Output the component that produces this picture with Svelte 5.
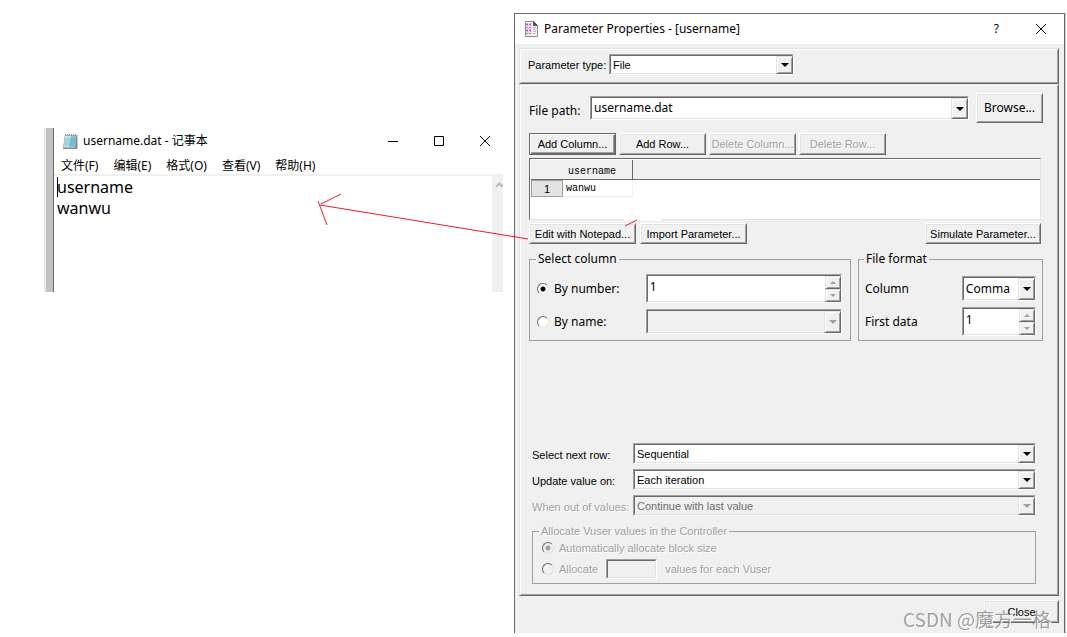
<script lang="ts">
	let notes = $state('username\nwanwu');
	let columnBy = $state('number');
	let allocation = $state('auto');
	let columnNumber = $state('1');
	let firstData = $state('1');

	const menus = ['文件(F)', '编辑(E)', '格式(O)', '查看(V)', '帮助(H)'];

	const rowSettings = [
		{ id: 'next-row', label: 'Select next row:', value: 'Sequential', disabled: false },
		{ id: 'update-on', label: 'Update value on:', value: 'Each iteration', disabled: false },
		{ id: 'out-of-values', label: 'When out of values:', value: 'Continue with last value', disabled: true }
	];
</script>

{#snippet combo(id: string, value: string, disabled: boolean, label: string | undefined)}
	<span class="field combo" class:off={disabled}>
		<select {id} {disabled} aria-label={label}>
			<option>{value}</option>
		</select>
		<span class="drop"><i class="down"></i></span>
	</span>
{/snippet}

{#snippet spinButtons()}
	<span class="spin">
		<button type="button" aria-label="Increase"><i class="up"></i></button>
		<button type="button" aria-label="Decrease"><i class="down"></i></button>
	</span>
{/snippet}

<main class="desktop">
	<section class="notepad" aria-label="Notepad">
		<header>
			<svg class="note-icon" width="16" height="17" viewBox="0 0 16 17">
				<path d="M3 2h12.500v14H1z" fill="#8b8f80" />
				<path d="M3 2h11.500l-1.500 13H1z" fill="#84c6d6" />
				<path d="M3 3h6L7 14H2z" fill="#bfe6ee" />
				<path d="M3 6h10.500M3 8h10M2.500 10h10.500M2.500 12h10" stroke="#5fa9bb" stroke-width=".6" />
				<path d="M3.500 1v2M5.500 1v2M7.500 1v2M9.500 1v2M11.500 1v2M13.500 1v2" stroke="#8a9ba0" />
			</svg>
			<h1>username.dat - 记事本</h1>
			<div class="window-buttons">
				<button type="button" aria-label="Minimize">
					<svg width="12" height="12"><path d="M1 6.500h10" /></svg>
				</button>
				<button type="button" aria-label="Maximize">
					<svg width="12" height="12"><path d="M1.500 1.500h9v9h-9z" /></svg>
				</button>
				<button type="button" aria-label="Close">
					<svg width="12" height="12"><path d="M1 1l10 10M11 1L1 11" /></svg>
				</button>
			</div>
		</header>
		<nav>
			{#each menus as menu}
				<button type="button">{menu}</button>
			{/each}
		</nav>
		<div class="editor">
			<textarea bind:value={notes} aria-label="Text" spellcheck="false"></textarea>
			<span class="caret"></span>
			<div class="scrollbar">
				<svg width="8" height="8"><path d="M1 6l3.500-3.500L8 6" fill="none" stroke="#bbb" stroke-width="2" /></svg>
			</div>
		</div>
	</section>

	<section class="dialog" aria-label="Parameter Properties">
		<header>
			<svg width="15" height="16" viewBox="0 0 15 16">
				<path d="M1.500.500h8l4 4v11h-12z" fill="#f4f4f4" stroke="#8c8c8c" />
				<path d="M9.500.500v4h4z" fill="#555" stroke="#555" />
				<path d="M9 6.500h3M9 8.500h3M9 10.500h3M9 12.500h3" stroke="#b5b5b5" />
				<path d="M2 2h6v12H2z" fill="#f3d9f4" />
				<path d="M2 3.500h6M2 6.500h6M2 9.500h6M2 12.500h6" stroke="#b565bd" stroke-dasharray="2 1" />
				<path d="M3.500 2v12M6.500 2v12" stroke="#c98bd0" stroke-dasharray="1 1" />
			</svg>
			<h2>Parameter Properties - [username]</h2>
			<button class="help" type="button" aria-label="Help">?</button>
			<button type="button" aria-label="Close window">
				<svg width="12" height="12"><path d="M1 1l10 10M11 1L1 11" /></svg>
			</button>
		</header>

		<div class="panel type-panel">
			<label for="param-type">Parameter type:</label>
			{@render combo('param-type', 'File', false, undefined)}
		</div>

		<div class="panel">
			<div class="path-row large">
				<label for="file-path">File path:</label>
				{@render combo('file-path', 'username.dat', false, undefined)}
				<button class="push" type="button">Browse...</button>
			</div>

			<div class="column-buttons">
				<button class="push default" type="button">Add Column...</button>
				<button class="push" type="button">Add Row...</button>
				<button class="push" type="button" disabled>Delete Column...</button>
				<button class="push" type="button" disabled>Delete Row...</button>
			</div>

			<div class="data">
				<table>
					<thead>
						<tr><th class="index"></th><th class="name">username</th><th></th></tr>
					</thead>
					<tbody>
						<tr><th class="index">1</th><td class="name">wanwu</td><td></td></tr>
					</tbody>
				</table>
			</div>

			<div class="edit-buttons">
				<button class="push" type="button">Edit with Notepad...</button>
				<button class="push" type="button">Import Parameter...</button>
				<button class="push simulate" type="button">Simulate Parameter...</button>
			</div>

			<div class="groups large">
				<fieldset class="select-column">
					<legend>Select column</legend>
					<div class="group-row">
						<label><input type="radio" value="number" bind:group={columnBy} />By number:</label>
						<span class="field tall">
							<input type="text" bind:value={columnNumber} aria-label="Column number" />
							{@render spinButtons()}
						</span>
					</div>
					<div class="group-row">
						<label><input type="radio" value="name" bind:group={columnBy} />By name:</label>
						{@render combo('column-name', '', true, 'Column name')}
					</div>
				</fieldset>
				<fieldset class="file-format">
					<legend>File format</legend>
					<div class="group-row">
						<label for="delimiter">Column</label>
						{@render combo('delimiter', 'Comma', false, undefined)}
					</div>
					<div class="group-row">
						<label for="first-data">First data</label>
						<span class="field tall">
							<input id="first-data" type="text" bind:value={firstData} />
							{@render spinButtons()}
						</span>
					</div>
				</fieldset>
			</div>

			<div class="row-settings">
				{#each rowSettings as s (s.id)}
					<div class="setting">
						<label for={s.id} class:dim={s.disabled}>{s.label}</label>
						{@render combo(s.id, s.value, s.disabled, undefined)}
					</div>
				{/each}
			</div>

			<fieldset class="allocate dim" disabled>
				<legend>Allocate Vuser values in the Controller</legend>
				<label><input type="radio" value="auto" bind:group={allocation} />Automatically allocate block size</label>
				<div class="block-size">
					<label><input type="radio" value="manual" bind:group={allocation} />Allocate</label>
					<span class="field off"><input type="text" aria-label="Block size" /></span>
					<span>values for each Vuser</span>
				</div>
			</fieldset>
		</div>

		<footer>
			<button class="push" type="button">Close</button>
		</footer>

		<span class="watermark">CSDN @魔方一格</span>

		<!-- hand-drawn pointer from "Edit with Notepad..." to the Notepad window -->
		<svg class="pointer" width="330" height="50" viewBox="314 190 330 50">
			<path d="M624 219.500h38" stroke="#fff" stroke-width="2" />
			<path d="M528 239L320 205M341 194L321 204M318 201L327 225M625 226L637 220" stroke="#ed1c24" fill="none" />
		</svg>
	</section>
</main>

<style>
	:global(body) {
		background: #fff;
	}

	.desktop {
		display: flex;
		align-items: flex-start;
		gap: 11px;
		padding: 13px 2px 4px 44px;
		font-family: 'Liberation Sans', Arial, sans-serif;
		font-size: 11px;
		line-height: 14px;
		color: #000;
	}

	button,
	input,
	select,
	textarea {
		box-sizing: border-box;
		margin: 0;
		padding: 0;
		border: 0;
		border-radius: 0;
		background: none;
		color: inherit;
		font: inherit;
		outline: none;
	}

	h1,
	h2 {
		margin: 0;
		font-size: 12px;
		font-weight: 400;
		white-space: nowrap;
	}

	header button svg {
		display: block;
		fill: none;
		stroke: #000;
	}

	/* Notepad */
	.notepad {
		flex: 459 1 459px;
		min-width: 0;
		margin-top: 115px;
		box-sizing: border-box;
		border-left: 1px solid #696969;
		border-image: linear-gradient(to right, #eaeaea 0 2px, #c3c3c3 2px 9px, #696969 9px 10px) 0 0 0 10 / 0 0 0 10px;
		padding-left: 9px;
		font-family: 'Noto Sans', 'Noto Sans CJK SC', sans-serif;
		font-size: 12px;
	}

	.notepad header {
		display: flex;
		align-items: center;
		height: 26px;
		padding: 0 12px 0 8px;
	}

	.note-icon {
		margin-right: 5px;
	}

	.window-buttons {
		display: flex;
		gap: 34px;
		margin-left: auto;
	}

	nav {
		display: flex;
		align-items: center;
		gap: 15px;
		height: 16px;
		padding: 4px 7px 0;
		border-bottom: 2px solid #f0f0f0;
	}

	nav button {
		white-space: nowrap;
	}

	.editor {
		position: relative;
		display: flex;
		height: 116px;
	}

	textarea {
		flex: 1;
		min-width: 0;
		padding: 1px 3px;
		resize: none;
		overflow: hidden;
		font-size: 16px;
		line-height: 21px;
	}

	.caret {
		position: absolute;
		left: 3px;
		top: 1px;
		width: 1px;
		height: 20px;
		background: #000;
	}

	.scrollbar {
		width: 11px;
		padding-top: 2px;
		box-sizing: border-box;
		background: #f0f0f0;
		text-align: right;
	}

	/* Dialog */
	.dialog {
		position: relative;
		flex: 551 1 551px;
		min-width: 0;
		box-sizing: border-box;
		border: solid #696969;
		border-width: 1px 1px 0;
		background: #f0f0f0;
		box-shadow: 1px 0 #ccc;
	}

	.dialog header {
		display: flex;
		align-items: center;
		height: 30px;
		padding: 0 17px 0 9px;
		background: #fff;
		font-family: 'Noto Sans', sans-serif;
	}

	.dialog h2 {
		flex: 1;
		margin-left: 5px;
	}

	.help {
		margin-right: 36px;
		font-size: 12px;
	}

	.panel {
		margin: 0 5px 0 4px;
		padding: 8px 15px 11px 9px;
		border: 1px solid;
		border-color: #e3e3e3 #696969 #696969 #e3e3e3;
		box-shadow: inset 1px 1px #fff, inset -1px -1px #a0a0a0;
	}

	.type-panel {
		display: flex;
		align-items: center;
		margin-top: 4px;
		padding: 5px 8px 8px;
	}

	.type-panel label {
		width: 81px;
	}

	.type-panel .combo {
		width: 185px;
	}

	.large {
		font-family: 'Noto Sans', sans-serif;
		font-size: 12px;
	}

	.push {
		height: 22px;
		border: 1px solid;
		border-color: #fff #696969 #696969 #fff;
		background: #f0f0f0;
		box-shadow: inset 1px 1px #e3e3e3, inset -1px -1px #a0a0a0;
		white-space: nowrap;
	}

	.push.default {
		border-color: #696969;
		box-shadow: inset 1px 1px #fff, inset -1px -1px #696969, inset -2px -2px #a0a0a0;
	}

	.push:disabled,
	.dim {
		color: #a0a0a0;
		text-shadow: 1px 1px #fff;
	}

	.field {
		position: relative;
		display: flex;
		box-sizing: border-box;
		height: 21px;
		border: 1px solid;
		border-color: #a0a0a0 #fff #fff #a0a0a0;
		background: #fff;
	}

	.field select,
	.field input {
		flex: 1;
		width: 100%;
		min-width: 0;
		padding: 0 18px 0 2px;
		border: 1px solid;
		border-color: #696969 #e3e3e3 #e3e3e3 #696969;
		appearance: none;
	}

	.off {
		background: #f0f0f0;
	}

	.off select {
		color: #6d6d6d;
		opacity: 1;
		text-shadow: none;
	}

	.drop,
	.spin button {
		display: flex;
		align-items: center;
		justify-content: center;
		box-sizing: border-box;
		border: 1px solid;
		border-color: #e3e3e3 #696969 #696969 #e3e3e3;
		background: #f0f0f0;
		box-shadow: inset 1px 1px #fff, inset -1px -1px #a0a0a0;
	}

	.drop {
		position: absolute;
		top: 1px;
		right: 0;
		bottom: 0;
		width: 17px;
		pointer-events: none;
	}

	.spin {
		position: absolute;
		top: 1px;
		right: 0;
		bottom: 0;
		display: flex;
		flex-direction: column;
		width: 16px;
	}

	.spin button {
		flex: 1;
	}

	.down,
	.up {
		border: solid transparent;
		border-width: 0 4px;
	}

	.down {
		border-top: 4px solid #000;
	}

	.up {
		border-bottom: 3px solid #a0a0a0;
	}

	.spin .down {
		border-top: 3px solid #a0a0a0;
	}

	.spin .down,
	.spin .up {
		border-left-width: 3px;
		border-right-width: 3px;
	}

	.off .down {
		border-top-color: #a0a0a0;
	}

	.path-row {
		display: flex;
		align-items: center;
	}

	.path-row label {
		width: 61px;
		padding-top: 5px;
	}

	.path-row .combo {
		flex: 1;
		height: 24px;
	}

	.path-row .push {
		width: 67px;
		height: 30px;
		margin-left: 7px;
	}

	.column-buttons {
		display: flex;
		gap: 3px;
		margin: 10px 0 3px;
	}

	.column-buttons .push {
		width: 87px;
	}

	.data {
		height: 62px;
		margin-right: 2px;
		box-sizing: border-box;
		border: 1px solid;
		border-color: #696969 #e3e3e3 #e3e3e3 #696969;
		padding: 1px 0 0 1px;
		background: #fff;
	}

	table {
		width: 100%;
		border-collapse: separate;
		border-spacing: 0;
		table-layout: fixed;
	}

	th,
	td {
		box-sizing: border-box;
		padding: 0;
		font-weight: 400;
	}

	thead th {
		height: 20px;
		border-bottom: 1px solid #696969;
		background: #f0f0f0;
	}

	.index {
		width: 32px;
	}

	.name {
		width: 70px;
		font-family: 'Liberation Mono', monospace;
		font-size: 10px;
	}

	thead .name {
		padding: 4px 10px 0 5px;
		border-right: 1px solid #696969;
		text-align: left;
	}

	tbody .index {
		height: 17px;
		border: 1px solid #a0a0a0;
		background: #e3e3e3;
	}

	tbody .name {
		padding: 2px 0 0 3px;
		border: solid #f0f0f0;
		border-width: 0 1px 1px 0;
	}

	.edit-buttons {
		display: flex;
		gap: 4px;
		margin: 3px 2px 8px 0;
	}

	.edit-buttons .push {
		width: 107px;
		height: 21px;
	}

	.edit-buttons .simulate {
		width: 116px;
		margin-left: auto;
	}

	.groups {
		display: flex;
		gap: 7px;
	}

	fieldset {
		min-width: 0;
		box-sizing: border-box;
		margin: 0;
		border: 1px solid #a0a0a0;
	}

	legend {
		padding: 0 2px;
	}

	.groups fieldset {
		height: 89px;
		padding: 8px 8px 0 7px;
	}

	.groups legend {
		margin-left: -1px;
	}

	.groups .select-column {
		flex: 322 1 322px;
	}

	.groups .file-format {
		flex: 185 1 185px;
		padding: 8px 6px 0;
	}

	.group-row {
		display: flex;
		align-items: center;
		height: 29px;
		margin-bottom: 4px;
	}

	.group-row label {
		flex: 109 1 0;
		white-space: nowrap;
	}

	.group-row .field {
		flex: 195 1 0;
		height: 25px;
	}

	.group-row .field.tall {
		height: 29px;
	}

	.group-row .tall input {
		padding-bottom: 4px;
	}

	.file-format .group-row label {
		flex: 98 1 0;
	}

	.file-format .group-row .field {
		flex: 73 1 0;
	}

	label {
		display: flex;
		align-items: center;
	}

	input[type='radio'] {
		flex: none;
		width: 12px;
		height: 12px;
		margin-right: 5px;
		border: 1px solid;
		border-color: #696969 #e3e3e3 #e3e3e3 #696969;
		border-radius: 50%;
		background: #fff;
		appearance: none;
	}

	input[type='radio']:checked {
		background: radial-gradient(circle, #000 0 2px, #fff 3px);
	}

	input[type='radio']:disabled {
		background: #f0f0f0;
	}

	input[type='radio']:disabled:checked {
		background: radial-gradient(circle, #a0a0a0 0 2px, #f0f0f0 3px);
	}

	.row-settings {
		display: grid;
		gap: 5px;
		margin: 102px 7px 8px 3px;
	}

	.setting {
		display: flex;
	}

	.setting label {
		width: 101px;
		padding-top: 3px;
		white-space: nowrap;
	}

	.setting .combo {
		flex: 1;
	}

	.allocate {
		height: 60px;
		margin: 0 7px 0 3px;
		padding: 3px 9px 0;
	}

	.allocate legend {
		margin-left: -3px;
	}

	.block-size {
		display: flex;
		align-items: center;
		gap: 8px;
		margin-top: 4px;
	}

	.block-size .field {
		width: 51px;
		height: 20px;
	}

	.block-size .field input {
		padding: 0 2px;
	}

	footer {
		display: flex;
		justify-content: flex-end;
		padding: 4px 5px 10px;
	}

	footer .push {
		width: 75px;
		height: 23px;
	}

	.watermark {
		position: absolute;
		right: 13px;
		bottom: 0;
		color: rgba(120, 120, 120, 0.7);
		font-family: 'Noto Sans CJK SC', sans-serif;
		font-size: 19px;
		line-height: 28px;
		text-shadow: 1px 1px #fff;
		pointer-events: none;
		white-space: nowrap;
	}

	.pointer {
		position: absolute;
		top: 176px;
		left: -201px;
		overflow: visible;
		pointer-events: none;
	}
</style>
